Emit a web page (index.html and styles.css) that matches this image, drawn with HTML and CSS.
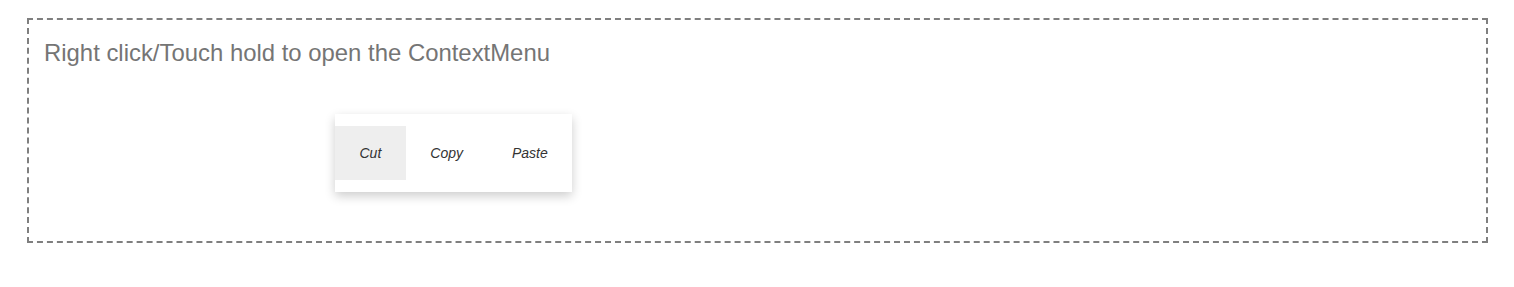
FILE: index.html
```html
<!DOCTYPE html>
<html lang="en">
<head>
  <meta charset="UTF-8">
  <meta name="viewport" content="width=device-width, initial-scale=1.0">
  <title>ContextMenu</title>
  <link rel="stylesheet" href="styles.css">
</head>
<body>
  <div class="target">
    <p class="hint">Right click/Touch hold to open the ContextMenu</p>

    <!-- context menu popup -->
    <ul class="context-menu">
      <li class="menu-item focused">Cut</li>
      <li class="menu-item">Copy</li>
      <li class="menu-item">Paste</li>
    </ul>
  </div>
</body>
</html>
```

FILE: styles.css
```css
body {
  margin: 0;
  padding: 18px 26px 0 27px;
  background-color: #ffffff;
  font-family: "Liberation Sans", Arial, sans-serif;
}

.target {
  position: relative;
  height: 221px;
  border: 2px dashed #7f7f7f;
  box-sizing: content-box;
}

.hint {
  margin: 0;
  padding: 19px 0 0 15px;
  font-size: 23.9px;
  line-height: 28px;
  color: #757575;
}

.context-menu {
  position: absolute;
  left: 306px;
  top: 94px;
  display: flex;
  margin: 0;
  padding: 12px 0;
  list-style: none;
  background: #ffffff;
  box-shadow: 0 4px 10px rgba(0, 0, 0, 0.2);
}

.menu-item {
  height: 54px;
  line-height: 54px;
  padding: 0 24.5px;
  font-size: 14px;
  font-style: italic;
  color: #333;
  cursor: pointer;
}

.menu-item.focused {
  background-color: #eeeeee;
}
```
